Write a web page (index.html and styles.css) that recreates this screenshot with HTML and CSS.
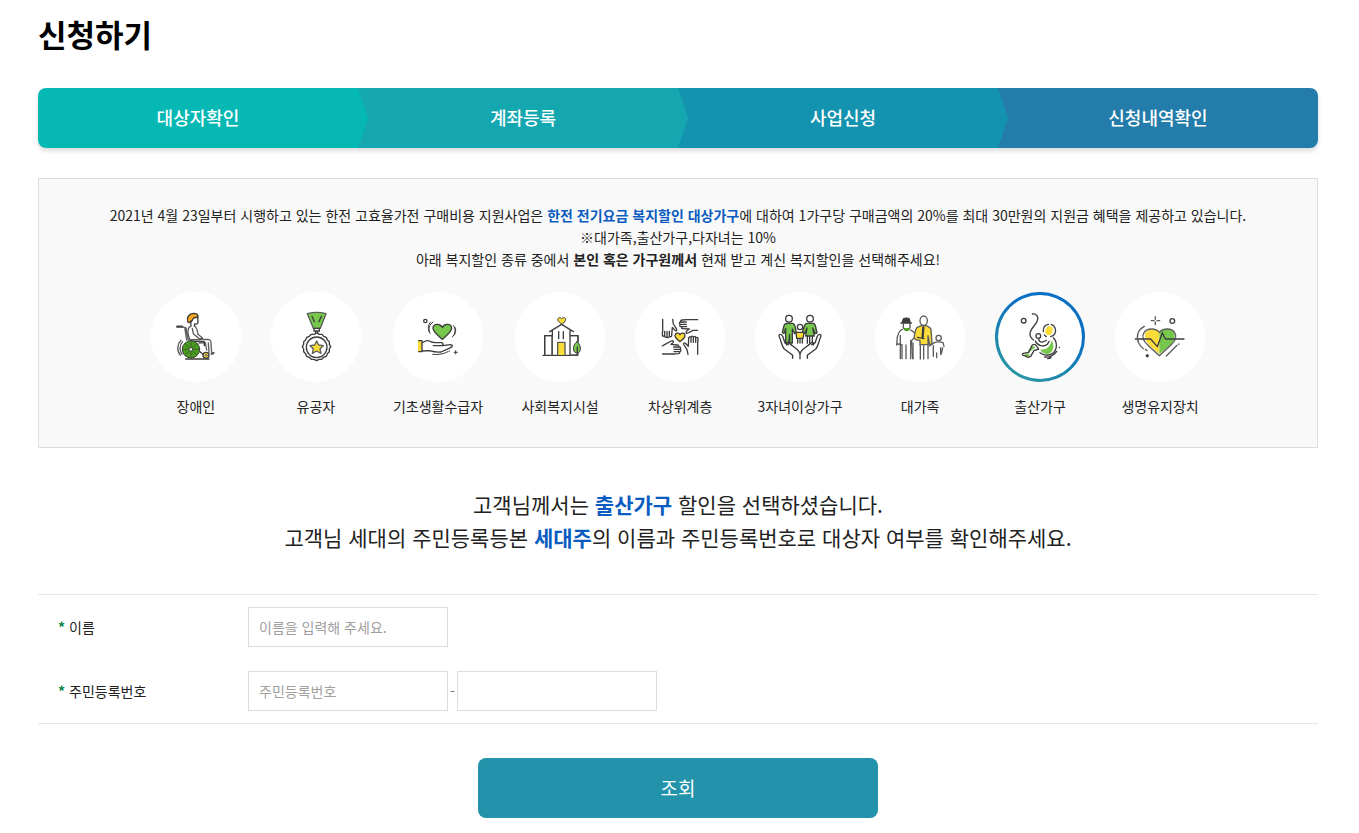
FILE: index.html
```html
<!DOCTYPE html>
<html lang="ko">
<head>
    <meta charset="UTF-8">
    <meta name="viewport" content="width=device-width, initial-scale=1.0">
    <title>신청하기</title>
    <link rel="stylesheet" href="styles.css">
</head>
<body>

<div class="container">
    <h1>신청하기</h1>

    <ol class="steps">
        <li class="step step1">대상자확인</li>
        <li class="step step2">계좌등록</li>
        <li class="step step3">사업신청</li>
        <li class="step step4">신청내역확인</li>
    </ol>

    <section class="guide">
        <p>
            2021년 4월 23일부터 시행하고 있는 한전 고효율가전 구매비용 지원사업은 <strong class="blue">한전 전기요금 복지할인 대상가구</strong>에 대하여 1가구당 구매금액의 20%를 최대 30만원의 지원금 혜택을 제공하고 있습니다.<br>
            ※대가족,출산가구,다자녀는 10%<br>
            아래 복지할인 종류 중에서 <strong>본인 혹은 가구원께서</strong> 현재 받고 계신 복지할인을 선택해주세요!
        </p>

        <ul class="types">
            <li>
                <button type="button" class="type">
                    <span class="circle">
                        <svg viewBox="18 21 270 270" aria-hidden="true">
                            <path class="orange" d="M128 110c-4-13 4-24 18-25 9 0 14 4 13 11l-13 3-7 11-7 3z"/>
                            <path d="M158 96l1 17c-1 4-5 5-10 4l-1 7M137 108l1 15"/>
                            <path class="light" d="M137 124c-9 3-9 15-7 26l4 13 28 1M150 124c5 4 7 12 9 24l14 12M142 130l3 16 16 14 9 1"/>
                            <path class="thick" d="M97 125h14"/>
                            <path class="light" d="M112 126l11 3 7 36M120 132l5 33M160 164l28-1c8 0 10 5 10 12l2 30M162 174l19-1 4 22M190 174l2 29M200 204l7-1c0 4-5 5-9 4"/>
                            <path d="M134 168l44 2v12"/>
                            <path class="light" d="M108 166c-12 12-13 32-2 44M113 170c-10 11-10 27-2 37"/>
                            <circle class="dgreen thin" cx="138" cy="193" r="26"/>
                            <path class="spoke" d="M138 171v44M116 193h44M123 178l30 30M153 178l-30 30"/>
                            <circle class="white spoke" cx="138" cy="193" r="5"/>
                            <path d="M165 200l8 7M122 222h70"/>
                            <circle class="yellow" cx="183" cy="211" r="9"/>
                            <circle class="white spoke" cx="183" cy="211" r="3"/>
                        </svg>
                    </span>
                    <span class="name">장애인</span>
                </button>
            </li>
            <li>
                <button type="button" class="type">
                    <span class="circle">
                        <svg viewBox="378 21 270 270" aria-hidden="true">
                            <path class="green light" d="M487 86c15-4 41-4 56 0l-17 44h-21z"/>
                            <path d="M501 94l7 16M529 94l-7 16M507 130h16v8h-16zM512 138v9M518 138v9"/>
                            <path class="white" d="M515 144l8 4 8 0 5 6 8 3 3 8 6 5 0 8 4 7-4 7 0 8-6 6-3 8-8 3-6 6-8 0-7 4-8-4-8 0-6-6-8-3-3-8-6-6 0-8-4-7 4-7 0-8 6-5 3-8 8-3 6-6 8 0z"/>
                            <circle class="white" cx="515" cy="187" r="31"/>
                            <path class="yellow light" d="M515 168l6 12 14 2-10 9 3 14-13-7-13 7 3-14-10-9 14-2z"/>
                        </svg>
                    </span>
                    <span class="name">유공자</span>
                </button>
            </li>
            <li>
                <button type="button" class="type">
                    <span class="circle">
                        <svg viewBox="21 21 270 270" aria-hidden="true">
                            <circle cx="118" cy="108" r="5"/>
                            <path class="green" d="M169 163c-13-11-28-23-28-33 0-13 20-17 28-3 8-14 28-10 28 3 0 10-15 22-28 33z"/>
                            <path class="thin" d="M141 111c-12 8-15 22-9 34M134 111c-8 8-9 20-4 30M203 122c7 12 5 25-4 34M207 127c4 9 2 17-2 23"/>
                            <path class="fill-yellow" d="M96 167h12v34H96z"/>
                            <path d="M98 167h10v33H98M108 174l11-6c5-3 10-1 17 3l11 2h20c6 1 5 8 0 9h-25M170 182l23-3c8 0 8 6 1 9l-29 13c-12 2-24-1-36-4l-21 1"/>
                            <path class="thin" d="M140 208c19 2 32-1 46-8M189 199l2-1M209 197v10M204 202h10"/>
                        </svg>
                    </span>
                    <span class="name">기초생활수급자</span>
                </button>
            </li>
            <li>
                <button type="button" class="type">
                    <span class="circle">
                        <svg viewBox="387 21 270 270" aria-hidden="true">
                            <path class="yellow thin" d="M527 118l-11-11c-4-7 6-13 11-6 6-7 16-1 11 6z"/>
                            <path d="M491 140l36-22 35 22M499 137v73M552 137v73M471 211h101"/>
                            <path class="light" d="M476 210v-58h22v58M553 152h23v58h-23"/>
                            <path d="M476 210v-58h21M554 152h22v17M518 140v21M532 140v21"/>
                            <path class="yellow light" d="M515 210v-38h22v38"/>
                            <path class="green thin" d="M573 170c-12 8-13 25-7 31 4 4 12 4 15-1 5-7 2-22-8-30z"/>
                            <path d="M574 186v25"/>
                        </svg>
                    </span>
                    <span class="name">사회복지시설</span>
                </button>
            </li>
            <li>
                <button type="button" class="type">
                    <span class="circle">
                        <svg viewBox="27 21 270 270" aria-hidden="true">
                            <path d="M110 103v33l-1 14c0 5 6 5 7 0M116 139v15c0 4 6 4 7 0v-15M123 154c0 5 7 5 7 0v-15M130 152c0 4 7 4 7 0l2-25 8 9c4 3 7 0 4-5l-9-14-2-14"/>
                            <path d="M215 104h-33l-14 1c-6 1-6 7 0 7M181 111h-17c-5 0-5 7 0 7h17M165 118c-5 0-5 7 0 7h17M170 125c-5 0-4 6 0 6l20 1-9 7c-3 4 0 7 5 5l15-8h14"/>
                            <path d="M215 208v-33l1-14c0-5-6-5-7 0M209 172v-15c0-4-6-4-7 0v15M202 157c0-5-7-5-7 0v15M195 159c0-4-7-4-7 0l-1 25-9-9c-4-3-7 0-4 5l9 14 3 14"/>
                            <path d="M110 207h33l14-1c6-1 6-7 0-7M144 200h17c5 0 5-7 0-7h-17M160 193c5 0 5-7 0-7h-17M155 186c5 0 4-6 0-6l-20-2 6-5c3-4 0-7-5-5l-15 8-12 7"/>
                            <path class="yellow" d="M162 170c-8-7-15-12-15-18 0-8 11-11 15-3 4-8 15-5 15 3 0 6-7 11-15 18z"/>
                        </svg>
                    </span>
                    <span class="name">차상위계층</span>
                </button>
            </li>
            <li>
                <button type="button" class="type">
                    <span class="circle">
                        <svg viewBox="387 21 270 270" aria-hidden="true">
                            <circle class="white" cx="489" cy="101" r="10"/>
                            <circle class="white" cx="552" cy="101" r="10"/>
                            <path class="green" d="M480 115h19c6 0 8 7 9 13l3 14-5 4-7-14v42h-8v-26l-3 26h-9v-44l-5 16-5-4 5-20c1-5 4-7 10-7z"/>
                            <path class="green" d="M544 115h17c6 0 7 5 8 11l4 18-5 2-8-17 5 24h-26l4-24-7 16-7-3 6-18c1-6 4-9 9-9z"/>
                            <path d="M544 154v21M551 154v21M559 154v20"/>
                            <circle class="white" cx="522" cy="126" r="8"/>
                            <path class="yellow" d="M510 142h24l-3 18h-19z"/>
                            <path d="M515 162v12M522 162v12M529 162v12"/>
                            <path d="M500 220v-9l-25-19c-8-8-9-24-16-39-1-7 9-6 11 1l7 20 10 5M482 180c-4-8 4-10 8-5 13 13 32 18 32 34v12M544 220v-9l25-19c8-8 9-24 16-39 1-7-9-6-11 1l-7 20-10 5M562 180c4-8-4-10-8-5-13 13-32 18-32 34"/>
                        </svg>
                    </span>
                    <span class="name">3자녀이상가구</span>
                </button>
            </li>
            <li>
                <button type="button" class="type">
                    <span class="circle">
                        <svg viewBox="27 21 270 270" aria-hidden="true">
                            <path class="fill-dark" d="M107 111l4-11c6-3 15-3 20 0l3 11 4 2v3h-35v-3z"/>
                            <path class="light" d="M112 116v12c3 9 16 9 20 0v-12"/>
                            <path class="fill-dgreen" d="M111 127c6 4 16 4 22 0-2 15-18 17-22 0z"/>
                            <path class="light" d="M109 133c-10 3-12 12-15 23l-2 24M134 135l10 7M103 151v70M108 179l-13-2M120 180v41M108 180v41M134 166v55M141 174v47"/>
                            <ellipse class="light white" cx="173" cy="107" rx="11" ry="14"/>
                            <path class="yellow light" d="M166 122l-12 5c-7 6-7 18-10 31l5 6 13 3v12h24v-27l5 27 7-2-3-43c-1-6-7-9-15-12z"/>
                            <path class="thick" d="M172 127l-2 29"/>
                            <path d="M154 157l20 4"/>
                            <path class="light" d="M163 178v44M173 182v40M186 178v43M144 161c-8 1-8 7-7 15l3 45"/>
                            <circle class="light white" cx="218" cy="159" r="8"/>
                            <path class="light" d="M190 183l15-10c6-3 20-3 26 0l3 11M202 182v32M212 204v14M224 188v21M230 189l-4 17"/>
                        </svg>
                    </span>
                    <span class="name">대가족</span>
                </button>
            </li>
            <li>
                <button type="button" class="type on" aria-pressed="true">
                    <span class="circle">
                        <svg viewBox="387 21 270 270" aria-hidden="true">
                            <circle cx="473" cy="107" r="7"/>
                            <path d="M499 87c12-2 20 8 15 20-6 15-21 24-22 39-1 11 5 15 11 19"/>
                            <ellipse class="fill-yellow" cx="549" cy="137" rx="11" ry="14" transform="rotate(20 549 137)"/>
                            <path d="M532 140c-1-13 5-21 16-22M556 118c11 4 15 16 11 27-3 6-8 9-13 10M535 150l6 5"/>
                            <circle cx="517" cy="153" r="7"/>
                            <path class="fill-green" d="M557 166c9 15 6 35-9 40-12 3-22-3-25-13 16 3 29-5 34-27zM501 182l8 5-16 12-8-1zM482 205l10 3-6 8-12-5z"/>
                            <path d="M518 160c1 9 5 13 12 11l11-5M508 168c5 13 25 20 36 10l5-9M562 158c13 13 12 37-2 47-12 8-27 6-38-2M517 190l-9-11c-6-3-11 1-13 9l-7 14-16 3c-4 2-4 5 1 6l14 6 7-3 10-17 14-5"/>
                            <path d="M536 216c17 2 28-5 36-17M545 221c4 0 7-1 10-3M580 187v1"/>
                        </svg>
                    </span>
                    <span class="name">출산가구</span>
                </button>
            </li>
            <li>
                <button type="button" class="type">
                    <span class="circle">
                        <svg viewBox="42 21 270 270" aria-hidden="true">
                            <circle cx="214" cy="108" r="7"/>
                            <path class="light" d="M163 95v8M163 111v8M151 107h8M168 107h8"/>
                            <path class="fill-yellow" d="M175 142c-9-13-33-13-42 2-4 15 4 30 18 42l24 21z"/>
                            <path class="fill-green" d="M175 142c9-13 34-12 45 1 5 16-4 31-17 41l-28 24z"/>
                            <path class="light" d="M175 212l-34-31c-14-13-19-27-12-38 9-15 36-14 46-1 10-13 37-14 46 1 7 11 2 25-12 38z"/>
                            <path d="M103 162h46l20 23 15-42 9 19h56"/>
                            <path class="light" d="M130 124c-21 11-25 31-17 50 4 8 9 13 14 17"/>
                            <path class="light" d="M196 213l32-32M233 178l1-1M133 193l5 4"/>
                            <path class="fill-dark" d="M139 206l6 6-6 6-6-6z"/>
                        </svg>
                    </span>
                    <span class="name">생명유지장치</span>
                </button>
            </li>
        </ul>
    </section>

    <p class="selected">
        고객님께서는 <strong class="blue">출산가구</strong> 할인을 선택하셨습니다.<br>
        고객님 세대의 주민등록등본 <strong class="blue">세대주</strong>의 이름과 주민등록번호로 대상자 여부를 확인해주세요.
    </p>

    <form class="form">
        <div class="fields">
            <div class="row">
                <label for="userName"><span class="required">*</span> 이름</label>
                <input type="text" id="userName" placeholder="이름을 입력해 주세요.">
            </div>
            <div class="row">
                <label for="jumin1"><span class="required">*</span> 주민등록번호</label>
                <input type="text" id="jumin1" placeholder="주민등록번호" maxlength="6">
                <span class="dash">-</span>
                <input type="password" id="jumin2" aria-label="주민등록번호 뒷자리" maxlength="7">
            </div>
        </div>
        <button type="button" class="submit">조회</button>
    </form>
</div>

</body>
</html>
```
FILE: styles.css
```css
* {
    box-sizing: border-box;
}
body {
    margin: 0;
    background: #fff;
    color: #222;
    font-family: "Noto Sans CJK KR", sans-serif;
    font-size: 14px;
}
button, input {
    font-family: inherit;
}
.container {
    padding: 10px 41px 15px 38px;
}
h1 {
    margin: 0 0 30px;
    font-size: 31px;
    line-height: 48px;
    font-weight: 700;
    color: #000;
}

/* progress bar */
.steps {
    display: flex;
    margin: 0 0 30px;
    padding: 0;
    list-style: none;
    border-radius: 8px;
    box-shadow: 0 3px 5px rgba(0, 0, 0, 0.14);
}
.step {
    position: relative;
    width: 25%;
    height: 60px;
    line-height: 58px;
    text-align: center;
    font-size: 18px;
    font-weight: 500;
    color: #fff;
}
.step1 {
    background: #05b8b4;
    border-radius: 8px 0 0 8px;
}
.step2 {
    background: #14a7b0;
    padding-left: 10px;
}
.step3 {
    background: #1393af;
    padding-left: 10px;
}
.step4 {
    background: #237ca9;
    border-radius: 0 8px 8px 0;
}
.step:not(.step4)::after {
    content: "";
    position: absolute;
    top: 0;
    left: 100%;
    z-index: 1;
    width: 10px;
    height: 100%;
    background: inherit;
    clip-path: polygon(0 0, 100% 50%, 0 100%);
}

/* discount types */
.guide {
    padding: 25px 20px 30px;
    border: 1px solid #ddd;
    background: #f9f9f9;
    text-align: center;
}
.guide p {
    margin: 0 0 22px;
    line-height: 22px;
}
.blue {
    color: #0b5cc0;
}
.types {
    display: flex;
    flex-wrap: wrap;
    justify-content: center;
    gap: 30px;
    margin: 0;
    padding: 0;
    list-style: none;
}
.type {
    display: flex;
    flex-direction: column;
    align-items: center;
    gap: 13px;
    min-width: 90px;
    padding: 0;
    border: none;
    background: none;
    color: #222;
    cursor: pointer;
}
.circle {
    width: 90px;
    height: 90px;
    border-radius: 50%;
    background: #fff;
}
.type.on .circle {
    border: 3px solid transparent;
    background: linear-gradient(#fff, #fff) padding-box, linear-gradient(30deg, #319f9b, #0a6fc2 65%) border-box;
}
.circle svg {
    display: block;
    width: 90px;
    height: 90px;
    fill: none;
    stroke: #3c3c3c;
    stroke-width: 4;
    stroke-linecap: round;
    stroke-linejoin: round;
}
.type.on svg {
    margin: -3px;
}
.name {
    padding: 0 2px;
    font-size: 14px;
    line-height: 22px;
}
.spoke {
    stroke-width: 2;
}
.thin {
    stroke-width: 3;
}
.thick {
    stroke-width: 7;
}
.light {
    stroke: #5c5c5c;
}
.white {
    fill: #fff;
}
.yellow {
    fill: #fbdc39;
}
.orange {
    fill: #f5a623;
}
.green {
    fill: #76c74c;
}
.dgreen {
    fill: #489e1c;
}
.fill-yellow {
    fill: #fbdc39;
    stroke: none;
}
.fill-green {
    fill: #76c74c;
    stroke: none;
}
.fill-dgreen {
    fill: #489e1c;
    stroke: none;
}
.fill-dark {
    fill: #3c3c3c;
    stroke: none;
}

.selected {
    margin: 40px 0;
    text-align: center;
    font-size: 21px;
    line-height: 33px;
}

/* form */
.fields {
    border-top: 1px solid #e5e5e5;
    border-bottom: 1px solid #e5e5e5;
}
.row {
    display: flex;
    align-items: center;
    padding: 12px 0;
}
.row label {
    width: 210px;
    padding-left: 20px;
}
.required {
    color: #00854a;
    font-weight: 700;
}
.row input {
    width: 200px;
    height: 40px;
    padding: 0 10px;
    border: 1px solid #ddd;
    background: #fff;
    font-size: 14px;
}
.row input::placeholder {
    color: #a0a0a0;
}
.dash {
    width: 9px;
    text-align: center;
    color: #777;
}
.submit {
    display: block;
    width: 100%;
    max-width: 400px;
    height: 60px;
    margin: 34px auto 0;
    padding: 0 0 2px;
    border: none;
    border-radius: 8px;
    background: #2293aa;
    color: #fff;
    font-size: 19px;
    cursor: pointer;
}
```
